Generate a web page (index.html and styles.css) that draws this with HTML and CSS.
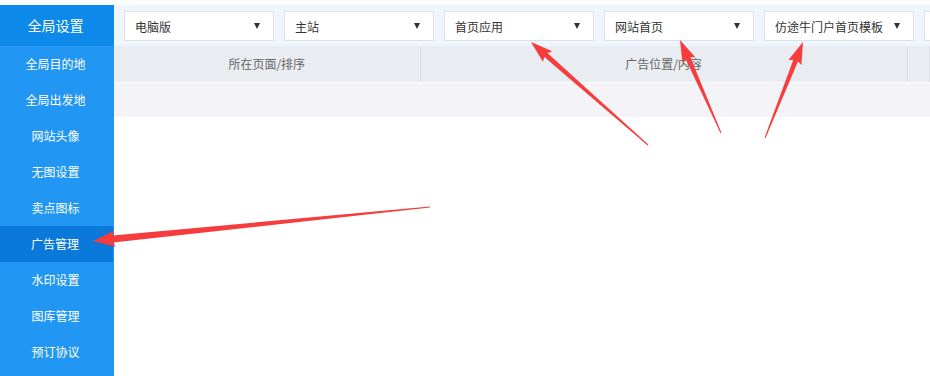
FILE: index.html
```html
<!DOCTYPE html>
<html lang="zh-CN">
<head>
    <meta charset="UTF-8">
    <meta name="viewport" content="width=device-width, initial-scale=1.0">
    <title>广告管理</title>
    <link rel="stylesheet" href="styles.css">
</head>
<body>
    <div class="page">
        <div class="sidebar">
            <div class="side-title">全局设置</div>
            <ul class="menu">
                <li>全局目的地</li>
                <li>全局出发地</li>
                <li>网站头像</li>
                <li>无图设置</li>
                <li>卖点图标</li>
                <li class="active">广告管理</li>
                <li>水印设置</li>
                <li>图库管理</li>
                <li>预订协议</li>
            </ul>
        </div>

        <div class="main">
            <div class="filters">
                <div class="select"><span>电脑版</span><i class="caret"></i></div>
                <div class="select"><span>主站</span><i class="caret"></i></div>
                <div class="select"><span>首页应用</span><i class="caret"></i></div>
                <div class="select"><span>网站首页</span><i class="caret"></i></div>
                <div class="select"><span>仿途牛门户首页模板</span><i class="caret"></i></div>
                <div class="select"><span></span><i class="caret"></i></div>
            </div>

            <table class="grid">
                <thead>
                    <tr>
                        <th class="col-page">所在页面/排序</th>
                        <th class="col-pos">广告位置/内容</th>
                        <th></th>
                    </tr>
                </thead>
                <tbody>
                    <tr><td colspan="3" class="empty"></td></tr>
                </tbody>
            </table>
        </div>
    </div>

    <!-- 标注箭头 -->
    <svg class="marks" width="930" height="376" viewBox="0 0 930 376">
        <polygon points="429.95,206.5 112.55,235.5 114.1,230.84 93,241 115.7,246.76 113.25,242.48 430.05,207.5"/>
        <polygon points="648.33,144.62 547.66,53.33 552.13,51.28 531,42 542.89,61.78 544.36,57.09 647.67,145.38"/>
        <polygon points="721.46,132.8 690.36,57.3 695.29,57.32 680,40 682.47,62.96 685.78,59.32 720.54,133.2"/>
        <polygon points="765.47,138.18 797.97,61.52 801.41,65.04 803,42 788.39,59.88 793.31,59.68 764.53,137.82"/>
    </svg>
</body>
</html>
```

FILE: styles.css
```css
* {
    margin: 0;
    padding: 0;
    box-sizing: border-box;
}

html, body {
    height: 100%;
    overflow: hidden;
}

body {
    font-family: "Microsoft YaHei", "Noto Sans CJK SC", sans-serif;
    font-size: 12px;
    background-color: #fbfcfe;
    color: #333;
    padding-top: 5px;
    position: relative;
}

.page {
    display: flex;
    height: 100%;
}

/* 左侧菜单 */
.sidebar {
    width: 114px;
    flex-shrink: 0;
    background-color: #2196f2;
}

.side-title {
    height: 41px;
    line-height: 41px;
    background-color: #0d89e9;
    color: #fff;
    font-size: 14px;
    text-align: center;
    padding-right: 3px;
}

.menu {
    list-style: none;
}

.menu li {
    height: 36px;
    line-height: 36px;
    color: #fff;
    text-align: center;
    padding-right: 3px;
}

.menu li.active {
    background-color: #0a79d9;
    margin-right: 1px;
}

/* 主区域 */
.main {
    flex: 1;
    background-color: #fff;
    overflow: hidden;
}

.filters {
    display: flex;
    gap: 10px;
    height: 41px;
    padding: 6px 0 0 10px;
    background-color: #eef5fc;
    white-space: nowrap;
}

.select {
    width: 150px;
    height: 30px;
    flex-shrink: 0;
    display: flex;
    align-items: center;
    justify-content: space-between;
    padding: 0 13px 0 10px;
    background-color: #fff;
    border: 1px solid #dce1e7;
    font-size: 12px;
    color: #333;
}

.caret {
    width: 0;
    height: 0;
    border-left: 3px solid transparent;
    border-right: 3px solid transparent;
    border-top: 6px solid #333;
}

.grid {
    border-collapse: collapse;
    width: 100%;
    table-layout: fixed;
}

.grid th {
    height: 36px;
    background-color: #e9ecf0;
    color: #666;
    font-weight: normal;
    font-size: 12px;
    border-right: 1px solid #dde1e6;
    border-bottom: 1px solid #fff;
}

.col-page {
    width: 306px;
}

.col-pos {
    width: 487px;
}

.grid td.empty {
    height: 35px;
    background-color: #f4f4f8;
}

/* 标注 */
.marks {
    position: absolute;
    top: 0;
    left: 0;
    pointer-events: none;
}

.marks polygon {
    fill: #f63c3c;
}
```
